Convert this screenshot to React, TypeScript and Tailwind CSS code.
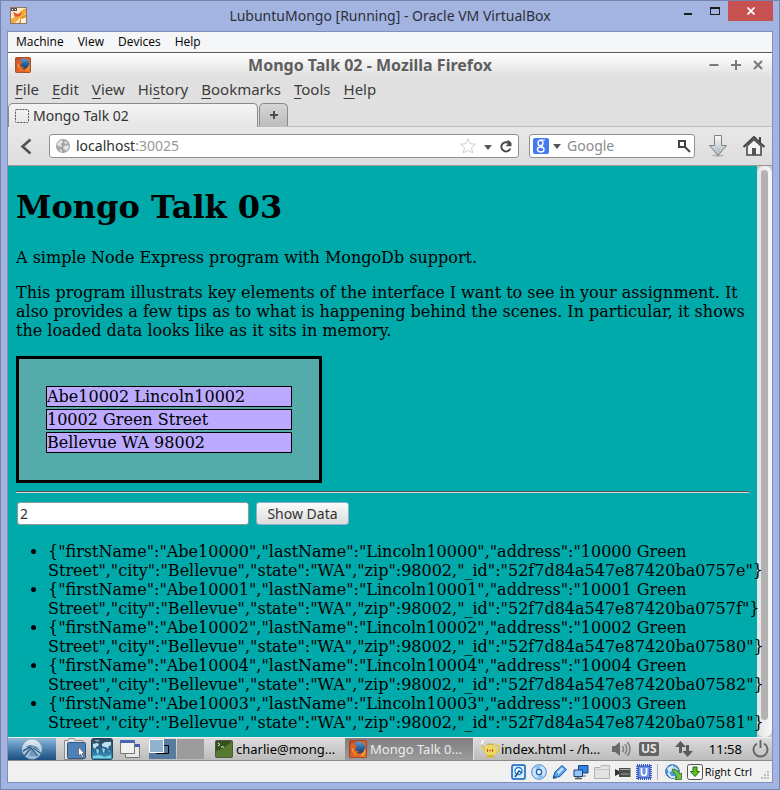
import React from "react";

const UI = "font-['Noto_Sans','Open_Sans',sans-serif]";

const hostMenu = ["Machine", "View", "Devices", "Help"];

const browserMenu: [string, string, string][] = [
  ["", "F", "ile"],
  ["", "E", "dit"],
  ["", "V", "iew"],
  ["Hi", "s", "tory"],
  ["", "B", "ookmarks"],
  ["", "T", "ools"],
  ["", "H", "elp"],
];

const address = ["Abe10002 Lincoln10002", "10002 Green Street", "Bellevue WA 98002"];

const records = [
  { n: "10000", id: "52f7d84a547e87420ba0757e" },
  { n: "10001", id: "52f7d84a547e87420ba0757f" },
  { n: "10002", id: "52f7d84a547e87420ba07580" },
  { n: "10004", id: "52f7d84a547e87420ba07582" },
  { n: "10003", id: "52f7d84a547e87420ba07581" },
].map(({ n, id }) =>
  JSON.stringify({
    firstName: "Abe" + n,
    lastName: "Lincoln" + n,
    address: n + " Green Street",
    city: "Bellevue",
    state: "WA",
    zip: 98002,
    _id: id,
  }),
);

function VmIcon() {
  return (
    <svg width="17" height="17" viewBox="0 0 17 17" aria-hidden="true">
      <rect x="0.5" y="0.5" width="16" height="16" fill="#fbe9c8" stroke="#8d7a66" />
      <path d="M1 16V12L7 9L11 4L16 1V6L10 11L5 16Z" fill="#f3a83c" />
      <path d="M9 16L11 10L16 7V10L13 12L12 16Z" fill="#e8912a" />
      <path d="M1 1H7V4H1Z" fill="#5c5550" />
      <path d="M2 2H3V3H2ZM5 2H6V3H5Z" fill="#fff" />
      <path d="M3 5L8 7L12 5L10 9L5 10Z" fill="#e4572a" />
      <path d="M11 12L15 11V16H11Z" fill="#fff1dc" />
    </svg>
  );
}

function FirefoxIcon({ className }: { className: string }) {
  return (
    <svg className={className} viewBox="0 0 17 17" aria-hidden="true">
      <defs>
        <linearGradient id="ffbg" x1="0" y1="0" x2="1" y2="1">
          <stop offset="0" stopColor="#b8442a" />
          <stop offset="0.5" stopColor="#e0602a" />
          <stop offset="1" stopColor="#ef7a2c" />
        </linearGradient>
        <linearGradient id="ffglobe" x1="0" y1="0" x2="0" y2="1">
          <stop offset="0" stopColor="#5f9fd0" />
          <stop offset="0.5" stopColor="#2b639c" />
          <stop offset="1" stopColor="#143a66" />
        </linearGradient>
      </defs>
      <rect x="0.5" y="0.5" width="16" height="16" rx="1" fill="url(#ffbg)" stroke="#a04a2c" />
      <circle cx="9.500" cy="7.500" r="6" fill="url(#ffglobe)" />
      <path
        d="M2 3.500C3 3.500 4 3 5 4C6 4.200 7 5 7.500 6.200L6 7.500C5.500 9.500 7 11 9.500 10.500C9 11.500 8.500 12 7.500 12C11 13.500 14.500 11.500 15 7C16.500 11.500 13 15.500 9 15.500C4 15.500 0.500 10.500 2 3.500Z"
        fill="#e0601f"
      />
      <path d="M11.500 14C14 12.500 15.300 10 15 7C16.300 10.500 14.500 14 11.500 15Z" fill="#f9bd3c" />
      <path d="M2.200 8C3 12 6 14.500 9 15C6 13.500 4.200 11 4 7.500Z" fill="#f29a38" />
    </svg>
  );
}

function Globe() {
  return (
    <svg width="14" height="14" viewBox="0 0 14 14" aria-hidden="true" className="shrink-0">
      <circle cx="7" cy="7" r="7" fill="#a3a3a3" />
      <path d="M2 3L6 1L7 3L5 5L6 7L4 8L1 6ZM8 7L12 6L13 8L11 12L9 11L7 9ZM9 2L12 4L10 5L8 4ZM3 10L6 11L6 13L4 12Z" fill="#e2e2e2" />
    </svg>
  );
}

function Caret() {
  return (
    <svg width="8" height="5" viewBox="0 0 8 5" aria-hidden="true" className="shrink-0">
      <path d="M0 0H8L4 5Z" fill="#555" />
    </svg>
  );
}

function TitleBar() {
  return (
    <header className="flex h-[30px] shrink-0 items-start">
      <span className="flex h-[29px] w-[111px] shrink-0 items-center pl-[9px]">
        <VmIcon />
      </span>
      <h1 className={`flex-1 self-center text-center text-[14px] leading-5 text-[#2b2f3a] ${UI}`}>
        LubuntuMongo [Running] - Oracle VM VirtualBox
      </h1>
      <div className="mr-1.5 flex h-5 w-[105px] shrink-0 justify-end">
        <button aria-label="Minimize" className="flex w-7 items-end justify-center pb-1.5">
          <svg width="8" height="2" viewBox="0 0 8 2">
            <path d="M0 0H8V2H0Z" fill="#1c1c1c" />
          </svg>
        </button>
        <button aria-label="Maximize" className="flex w-[26px] items-end justify-center pb-1.5">
          <svg width="10" height="8" viewBox="0 0 10 8">
            <path d="M0 0H10V8H0ZM1 2V7H9V2Z" fill="#1c1c1c" fillRule="evenodd" />
          </svg>
        </button>
        <button aria-label="Close" className="flex w-[45px] items-center justify-center bg-[#c75050]">
          <svg width="8" height="8" viewBox="0 0 8 8">
            <path d="M0.500 0.500L7.500 7.500M7.500 0.500L0.500 7.500" stroke="#fff" strokeWidth="1.8" />
          </svg>
        </button>
      </div>
    </header>
  );
}

function BrowserChrome() {
  return (
    <div className={`shrink-0 bg-[#e0e0e0] text-[14px] leading-5 text-[#3c3c3c] ${UI}`}>
      <div className="flex h-6 items-center bg-linear-to-b from-white to-[#e0e0e0] px-[7px]">
        <div className="w-[60px] shrink-0">
          <FirefoxIcon className="size-4" />
        </div>
        <h2 className="flex-1 pr-10 text-center text-[16px] font-bold text-[#5e5e5e]">
          Mongo Talk 02 - Mozilla Firefox
        </h2>
        <div className="flex w-[60px] shrink-0 justify-end gap-3 pr-0.5">
          <button aria-label="Minimize window">
            <svg width="10" height="10" viewBox="0 0 10 10">
              <path d="M0.500 5H9.500" stroke="#7a7a7a" strokeWidth="2" />
            </svg>
          </button>
          <button aria-label="Maximize window">
            <svg width="10" height="10" viewBox="0 0 10 10">
              <path d="M0 5H10M5 0V10" stroke="#7a7a7a" strokeWidth="2" />
            </svg>
          </button>
          <button aria-label="Close window">
            <svg width="10" height="10" viewBox="0 0 10 10">
              <path d="M1 1L9 9M9 1L1 9" stroke="#7a7a7a" strokeWidth="2" />
            </svg>
          </button>
        </div>
      </div>

      <nav className="flex h-[26px] items-center gap-[13px] px-[7px] pb-0.5 text-[15px]">
        {browserMenu.map(([pre, key, post]) => (
          <button key={key + post}>
            {pre}
            <span className="underline underline-offset-3">{key}</span>
            {post}
          </button>
        ))}
      </nav>

      <div className="flex h-6 items-end border-b border-[#bdbdbd]">
        <button className="-mb-px flex h-6 w-[250px] items-center gap-1 rounded-t-[5px] border border-b-0 border-[#8a8a8a] bg-linear-to-b from-[#f4f4f4] to-[#e6e6e6] pl-1.5 text-[#333]">
          <svg width="14" height="14" viewBox="0 0 14 14" aria-hidden="true">
            <rect x="0.5" y="0.5" width="13" height="13" rx="1" fill="none" stroke="#555" strokeDasharray="2 1" />
          </svg>
          Mongo Talk 02
        </button>
        <button
          aria-label="New tab"
          className="ml-px flex h-[23px] w-[29px] items-center justify-center rounded-t-[5px] border border-b-0 border-[#8a8a8a] bg-linear-to-b from-[#d6d6d6] to-[#bdbdbd]"
        >
          <svg width="8" height="8" viewBox="0 0 8 8">
            <path d="M0 4H8M4 0V8" stroke="#4d4d4d" strokeWidth="2" />
          </svg>
        </button>
      </div>

      <div className="flex h-[39px] items-center border-b border-[#999] bg-linear-to-b from-[#e8e8e8] to-[#dedede] pr-[7px] pl-3">
        <button aria-label="Back" className="mr-4 shrink-0">
          <svg width="13" height="17" viewBox="0 0 13 17">
            <path d="M10.500 1.500L2.500 8.500L10.500 15.500" fill="none" stroke="#505050" strokeWidth="2.600" />
          </svg>
        </button>
        <div className="flex h-6 min-w-0 flex-1 items-center gap-1.5 rounded-[3px] border border-[#919191] bg-white px-1.5">
          <Globe />
          <div className="relative min-w-0 flex-1">
            <input
              aria-label="Address"
              defaultValue="localhost:30025"
              className="block w-full bg-transparent text-transparent caret-black outline-none"
            />
            <span aria-hidden="true" className="pointer-events-none absolute inset-0 text-[#999]">
              <span className="text-[#2e2e2e]">localhost</span>:30025
            </span>
          </div>
          <button aria-label="Bookmark">
            <svg width="16" height="16" viewBox="0 0 16 16">
              <path
                d="M8 0.800L10.200 5.600L15.400 6.200L11.500 9.700L12.600 14.900L8 12.300L3.400 14.900L4.500 9.700L0.600 6.200L5.800 5.600Z"
                fill="#fff"
                stroke="#cfcfcf"
              />
            </svg>
          </button>
          <button aria-label="History list" className="ml-0.5 pt-0.5">
            <Caret />
          </button>
          <button aria-label="Reload" className="ml-0.5">
            <svg width="12" height="13" viewBox="0 0 12 13">
              <path d="M9 3.400A4.600 4.600 0 1 0 10.300 8.500" fill="none" stroke="#4a4a4a" strokeWidth="2" />
              <path d="M5.500 6.200H11.500V3L9 0.500H6.500L9 3Z" fill="#4a4a4a" />
            </svg>
          </button>
        </div>
        <div className="ml-2.5 flex h-6 w-[166px] shrink-0 items-center rounded-[3px] border border-[#919191] bg-white pr-[3px] pl-[3px]">
          <button aria-label="Search engine" className="flex items-center gap-1">
            <span className="flex size-4 items-center justify-center rounded-[2px] bg-[#4479f4]">
              <svg width="10" height="14" viewBox="0 0 10 14">
                <ellipse cx="4.500" cy="4" rx="2.500" ry="2.800" fill="none" stroke="#fff" strokeWidth="1.4" />
                <ellipse cx="4.700" cy="10.500" rx="3.300" ry="2.500" fill="none" stroke="#fff" strokeWidth="1.4" />
                <path d="M5 1H9M5 6.500L6.500 8.500" stroke="#fff" strokeWidth="1.2" />
              </svg>
            </span>
            <Caret />
          </button>
          <input
            aria-label="Search"
            placeholder="Google"
            className="ml-1.5 min-w-0 flex-1 bg-transparent outline-none placeholder:text-[#8c8c8c]"
          />
          <button aria-label="Go">
            <svg width="14" height="14" viewBox="0 0 14 14">
              <path d="M2 2H8V8H2Z" fill="none" stroke="#444" strokeWidth="2" />
              <path d="M8.500 8.500L13 13" stroke="#444" strokeWidth="2" />
            </svg>
          </button>
        </div>
        <button aria-label="Downloads" className="ml-3 shrink-0">
          <svg width="22" height="22" viewBox="0 0 22 22">
            <defs>
              <linearGradient id="dl" x1="0" y1="0" x2="0" y2="1">
                <stop offset="0" stopColor="#fafafa" />
                <stop offset="1" stopColor="#a9b6bb" />
              </linearGradient>
            </defs>
            <ellipse cx="11" cy="20.500" rx="6" ry="1.200" fill="#b5b5b5" />
            <path d="M7.500 0.500H14.500V10.500H19.500L11 20.500L2.500 10.500H7.500Z" fill="url(#dl)" stroke="#7d8285" />
          </svg>
        </button>
        <button aria-label="Home" className="ml-3.5 shrink-0">
          <svg width="22" height="20" viewBox="0 0 22 20">
            <path d="M4 10V19H18V10L11 3.500Z" fill="#f2f2f2" stroke="#4a4a4a" strokeWidth="1.600" />
            <path d="M0.500 11L11 1L21.500 11" fill="none" stroke="#444" strokeWidth="2" />
            <path d="M16 1H18V6H16Z" fill="#444" />
            <path d="M9 12H13V19H9Z" fill="#555" />
          </svg>
        </button>
      </div>
    </div>
  );
}

function Page() {
  return (
    <main className="relative z-10 min-w-0 flex-1 bg-[#00aaaa] px-2 font-['DejaVu_Serif',serif] text-[16px] leading-[19px] text-black">
      <h1 className="mt-[22px] text-[32px] leading-[38px] font-bold">Mongo Talk 03</h1>
      <p className="mt-[22px]">A simple Node Express program with MongoDb support.</p>
      <p className="mt-4">
        This program illustrats key elements of the interface I want to see in your assignment. It also provides a few
        tips as to what is happening behind the scenes. In particular, it shows the loaded data looks like as it sits
        in memory.
      </p>
      <div className="mt-4 flex w-[306px] flex-col gap-0.5 border-3 border-black bg-[#55aaaa] p-[27px]">
        {address.map((line) => (
          <div key={line} className="border border-black bg-[#bbaaff]">
            {line}
          </div>
        ))}
      </div>
      <hr className="mt-2 h-[2px] border-t border-b border-t-[#555] border-b-[#d8d8d8]" />
      <form className={`mt-[9px] flex gap-[7px] pl-px text-[14px] leading-5 text-[#333] ${UI}`} onSubmit={(e) => e.preventDefault()}>
        <input
          aria-label="Record"
          defaultValue="2"
          className="h-[23px] w-[232px] rounded-[3px] border border-[#8f9a9a] bg-white px-0.5 outline-none"
        />
        <button className="h-[23px] w-[93px] rounded-[3px] border border-[#8fb0cc] bg-linear-to-b from-[#fbfbfb] to-[#dcdcdc] whitespace-nowrap">
          Show Data
        </button>
      </form>
      <ul className="mt-[17px] list-disc pl-8">
        {records.map((r) => (
          <li key={r}>{r}</li>
        ))}
      </ul>
    </main>
  );
}

function FileManagerIcon() {
  return (
    <svg width="22" height="22" viewBox="0 0 22 22">
      <path d="M0.500 21.500V2.500H4L5 0.500H10L11 2.500H19V21.500Z" fill="#e4e4e4" stroke="#8b8b8b" />
      <rect x="3.500" y="4.500" width="18" height="16" rx="1" fill="#4f80b8" stroke="#2f5688" />
      <path d="M14.500 9V18L16.500 16L18 19.500L19.500 18.800L18 15.500H20.500Z" fill="#fff" stroke="#555" strokeWidth="0.700" />
    </svg>
  );
}

function WebIcon() {
  return (
    <svg width="22" height="22" viewBox="0 0 22 22">
      <defs>
        <linearGradient id="web" x1="0" y1="0" x2="0" y2="1">
          <stop offset="0" stopColor="#33475a" />
          <stop offset="0.600" stopColor="#2a6f9c" />
          <stop offset="1" stopColor="#3fa5c4" />
        </linearGradient>
      </defs>
      <rect x="0.500" y="0.500" width="21" height="21" rx="2" fill="url(#web)" stroke="#24455f" />
      <path d="M2 6L6 5L8 6L7 8L5 9L4 11L2 9ZM11 6L14 4L20 4V7L18 8L17 11L15 9L13 9L11 8Z" fill="#bfe0ee" />
      <path d="M5 11L8 12L7 16L6 15ZM11 10L14 11L13 15L12 14ZM17 12L19 13L18 14Z" fill="#a5d6e8" />
      <path d="M2 18L8 17L14 19L20 17V20H2Z" fill="#7fd0e4" />
      <path d="M3 2H9L6 4Z" fill="#8fa5b5" />
    </svg>
  );
}

function WindowsIcon() {
  return (
    <svg width="20" height="18" viewBox="0 0 20 18">
      <path d="M5.500 4.500H19.500V17.500H5.500Z" fill="#e8e8e8" stroke="#777" />
      <path d="M5 4H20V7H5Z" fill="#3e62b0" />
      <path d="M0.500 0.500H14.500V13.500H0.500Z" fill="#f0f0ee" stroke="#777" />
      <path d="M0 0H15V3H0Z" fill="#4468b4" />
    </svg>
  );
}

function Taskbar() {
  return (
    <nav className={`flex h-6 shrink-0 items-stretch border-t border-b border-t-[#efefef] border-b-[#8a8a8a] bg-linear-to-b from-[#dcdcdc] to-[#bcbcbc] text-[13px] leading-5 text-black ${UI}`}>
      <button aria-label="Menu" className="flex w-12 shrink-0 items-center justify-center bg-linear-to-b from-[#8fb8d8] via-[#4b82b0] to-[#1d4f80]">
        <svg width="22" height="21" viewBox="0 0 22 21">
          <defs>
            <linearGradient id="disc" x1="0" y1="0" x2="0" y2="1">
              <stop offset="0" stopColor="#e4ecf2" />
              <stop offset="1" stopColor="#8fb0cb" />
            </linearGradient>
          </defs>
          <circle cx="11" cy="10.500" r="10" fill="url(#disc)" />
          <path d="M3 17.500L10 9L16.500 17M12 9L20 14.500M2 12L9 8" fill="none" stroke="#2f5f8a" strokeWidth="1.500" />
          <path d="M4 8L9 6L16 8L19 12L13 8.500L10 8Z" fill="#4f7fa6" />
          <path d="M10 10L15 17L8 17Z" fill="#6f9abb" />
        </svg>
      </button>
      <div className="ml-2 flex shrink-0 items-center gap-[5px]">
        <button aria-label="Files"><FileManagerIcon /></button>
        <button aria-label="Web"><WebIcon /></button>
        <button aria-label="Show desktop" className="ml-0.5"><WindowsIcon /></button>
      </div>
      <div className="ml-[9px] flex shrink-0 gap-px py-px">
        <button aria-label="Desktop 1" className="w-[27px] bg-[#557c9f]">
          <svg width="27" height="20" viewBox="0 0 27 20">
            <path d="M7.500 6.500H19.500V14.500H7.500Z" fill="none" stroke="#000" />
            <path d="M0.500 0.500H14.500V13.500H0.500Z" fill="#92b3d0" stroke="#fff" />
          </svg>
        </button>
        <button aria-label="Desktop 2" className="w-[27px] bg-[#9c9c9c]" />
      </div>
      <button className="ml-[7px] flex w-[134px] shrink-0 items-center gap-[3px] pl-1 whitespace-nowrap">
        <svg width="18" height="18" viewBox="0 0 18 18" className="shrink-0">
          <rect x="0.500" y="0.500" width="17" height="17" rx="1" fill="#35511f" stroke="#4d5a40" />
          <path d="M1 11C6 10 12 6 17 1V17H1Z" fill="#56782f" />
          <path d="M3 3L5 4.500L3 6M6 7H9" fill="none" stroke="#e6f0dc" />
        </svg>
        charlie@mong...
      </button>
      <button className="flex w-32 shrink-0 items-center gap-[3px] bg-linear-to-b from-[#7e7e7e] to-[#9c9c9c] pl-1 whitespace-nowrap text-[#ededed]">
        <FirefoxIcon className="size-[18px] shrink-0" />
        Mongo Talk 0...
      </button>
      <button className="flex min-w-0 flex-1 items-center gap-px border-l border-[#e4e4e4] pl-[7px] whitespace-nowrap">
        <svg width="19" height="18" viewBox="0 0 19 18" className="shrink-0">
          <path d="M14 6C20 3 20 12 13 13" fill="none" stroke="#e0c648" strokeWidth="1.800" />
          <path d="M3 12L0 6L2 5L5 9Z" fill="#e0c648" />
          <ellipse cx="9.500" cy="10.500" rx="6" ry="5.500" fill="#efd95c" />
          <path d="M5 5H14L12 3.500H7ZM6 15H13L14 17.500H5Z" fill="#d6b53a" />
          <path d="M1 4C0 2 3 2 2 0" fill="none" stroke="#fff" strokeWidth="1.600" />
          <path d="M6 9H7V12H6ZM11 9H12V12H11ZM8 10H10V11H8Z" fill="#c4483a" />
        </svg>
        index.html - /h...
      </button>
      <div className="flex shrink-0 items-center pr-[3px]">
        <button aria-label="Volume">
          <svg width="20" height="16" viewBox="0 0 20 16">
            <path d="M0 5H3L8 1V15L3 11H0Z" fill="#6a6a6a" />
            <path d="M10.500 5Q12.500 8 10.500 11M13 3Q16.500 8 13 13M15.500 1Q20.500 8 15.500 15" fill="none" stroke="#808080" strokeWidth="1.600" />
          </svg>
        </button>
        <button className="ml-[7px] h-3.5 w-5 rounded-[2px] bg-[#626262] text-[12px] leading-[14px] font-bold text-[#e8e8e8]">
          US
        </button>
        <button aria-label="Network" className="ml-4">
          <svg width="18" height="16" viewBox="0 0 18 16">
            <path d="M5.500 0L11 6H7V12H4V6H0ZM12.500 16L7.500 10H11V4H14V10H18Z" fill="#5c5c5c" />
          </svg>
        </button>
        <time className="ml-4">11:58</time>
        <button aria-label="Power" className="ml-2.5">
          <svg width="17" height="18" viewBox="0 0 17 18">
            <path d="M5 3.500A7 7 0 1 0 12 3.500" fill="none" stroke="#646464" strokeWidth="1.900" />
            <path d="M8.500 0V8" stroke="#646464" strokeWidth="1.900" />
          </svg>
        </button>
      </div>
    </nav>
  );
}

function StatusBar() {
  return (
    <footer className="flex h-[21px] shrink-0 items-center justify-end gap-[5px] bg-[#f0f0f0] pr-0.5 font-['Open_Sans',sans-serif] text-[11px] leading-4 text-black">
      <svg width="15" height="16" viewBox="0 0 15 16">
        <rect x="1" y="1" width="13" height="14" rx="1.500" fill="#d9efff" stroke="#0a5fb8" strokeWidth="1.500" />
        <circle cx="7.500" cy="7" r="3.500" fill="#fff" stroke="#1e7ad2" strokeWidth="1.300" />
        <path d="M4 13L8 7L11 9" fill="none" stroke="#0a4f9e" strokeWidth="1.400" />
      </svg>
      <svg width="16" height="16" viewBox="0 0 16 16">
        <circle cx="8" cy="8" r="7.300" fill="#cfe6fa" stroke="#3f86cf" />
        <path d="M8 8L3 3A7 7 0 0 1 10 1ZM8 8L13 13A7 7 0 0 1 6 15Z" fill="#8fc2f0" />
        <circle cx="8" cy="8" r="2.600" fill="#fff" stroke="#1d5fae" strokeWidth="1.300" />
      </svg>
      <svg width="16" height="16" viewBox="0 0 16 16">
        <path d="M1 14L3 8L10 1.500L14.500 5.500L8 12.500Z" fill="#56a5ec" stroke="#1c5aa6" />
        <path d="M5 8L10 3.500L12 5L6.500 10.500Z" fill="#c5e2fb" />
        <path d="M1 15L2 11L5 14Z" fill="#2a5c94" />
      </svg>
      <svg width="16" height="16" viewBox="0 0 16 16">
        <path d="M5.500 1.500H15V9H5.500Z" fill="#2f86e6" stroke="#1b3f78" />
        <path d="M9 9V12H13" fill="none" stroke="#666" />
        <path d="M1 6H9.500V12.500H1Z" fill="#8fc6fb" stroke="#1b3f78" />
        <path d="M2 14.500H9M5 12.500V14" stroke="#555" strokeWidth="1.400" />
      </svg>
      <svg width="16" height="16" viewBox="0 0 16 16">
        <path d="M0.500 14.500V3.500H6L7.500 1.500H15.500V14.500Z" fill="#e2e2e2" stroke="#b0b0b0" />
        <path d="M1 5.500H15" stroke="#c8c8c8" />
      </svg>
      <svg width="16" height="16" viewBox="0 0 16 16">
        <path d="M4 4H15.500V13H4Z" fill="#4c4c4c" />
        <path d="M0 5L4 7V10L0 12Z" fill="#333" />
        <path d="M5 5.500H15M6 10H14" stroke="#a8a8a8" strokeWidth="1.200" />
      </svg>
      <svg width="16" height="16" viewBox="0 0 16 16">
        <rect x="1" y="1" width="14" height="14" fill="none" stroke="#3b5fc0" strokeWidth="2" strokeDasharray="1 1" />
        <rect x="2" y="2" width="12" height="12" fill="#6f92e8" stroke="#2c4cae" />
        <path d="M5.500 4V9Q5.500 11.500 8 11.500Q10.500 11.500 10.500 9V4" fill="none" stroke="#fff" strokeWidth="1.700" />
      </svg>
      <span className="h-4 w-px bg-[#b0b0b0]" />
      <svg width="17" height="16" viewBox="0 0 17 16" className="ml-0.5">
        <circle cx="7.500" cy="7.500" r="6.800" fill="#4f9be2" stroke="#1f5fa8" />
        <path d="M2 4L8 1L9 5L4 9ZM9 2L14 6L10 6Z" fill="#d8ecfc" />
        <path d="M3 9L6 13H10" fill="none" stroke="#fff" strokeWidth="1.600" />
        <path d="M7 5L12 6L15 10L16.500 9V15.500H10L12 13L9 9Z" fill="#6cc044" stroke="#2d6e1a" strokeWidth="0.800" />
      </svg>
      <svg width="16" height="16" viewBox="0 0 16 16">
        <rect x="0.500" y="0.500" width="15" height="15" rx="2" fill="#f8f8f8" stroke="#555" />
        <path d="M6 3H10V7.500H12.500L8 12.500L3.500 7.500H6Z" fill="#58c020" stroke="#226a08" />
      </svg>
      <span className="-ml-[3px] whitespace-nowrap">Right Ctrl</span>
      <svg width="9" height="9" viewBox="0 0 9 9" className="ml-1 self-end mb-0.5">
        <path d="M6 0H8V2H6ZM3 3H5V5H3ZM6 3H8V5H6ZM0 6H2V8H0ZM3 6H5V8H3ZM6 6H8V8H6Z" fill="#bdbdbd" />
      </svg>
    </footer>
  );
}

export default function App() {
  return (
    <div className="flex min-h-screen flex-col border border-[#7484ae] bg-[#a3b4e0]">
      <TitleBar />
      <div className="mx-1.5 mb-1.5 flex flex-1 flex-col border border-[#8090bd]">
        <nav className="flex h-[21px] shrink-0 items-center gap-3.5 border-b border-[#5c5c5c] bg-[#f5f6f8] pl-2 font-['Open_Sans',sans-serif] text-[12px] leading-4 text-black">
          {hostMenu.map((m) => (
            <button key={m}>{m}</button>
          ))}
        </nav>
        <BrowserChrome />
        <div className="flex flex-1">
          <Page />
          <div className="flex w-[15px] shrink-0 bg-[#c9c9c9]">
            <div className="flex flex-1 justify-center rounded-t-[7px] rounded-b-[7px] bg-linear-to-r from-[#e4e4e4] to-[#f8f8f8] pt-1 pb-[17px]">
              <div className="w-[7px] rounded-full bg-[#b2b2b2]" />
            </div>
          </div>
        </div>
        <Taskbar />
        <StatusBar />
      </div>
    </div>
  );
}
